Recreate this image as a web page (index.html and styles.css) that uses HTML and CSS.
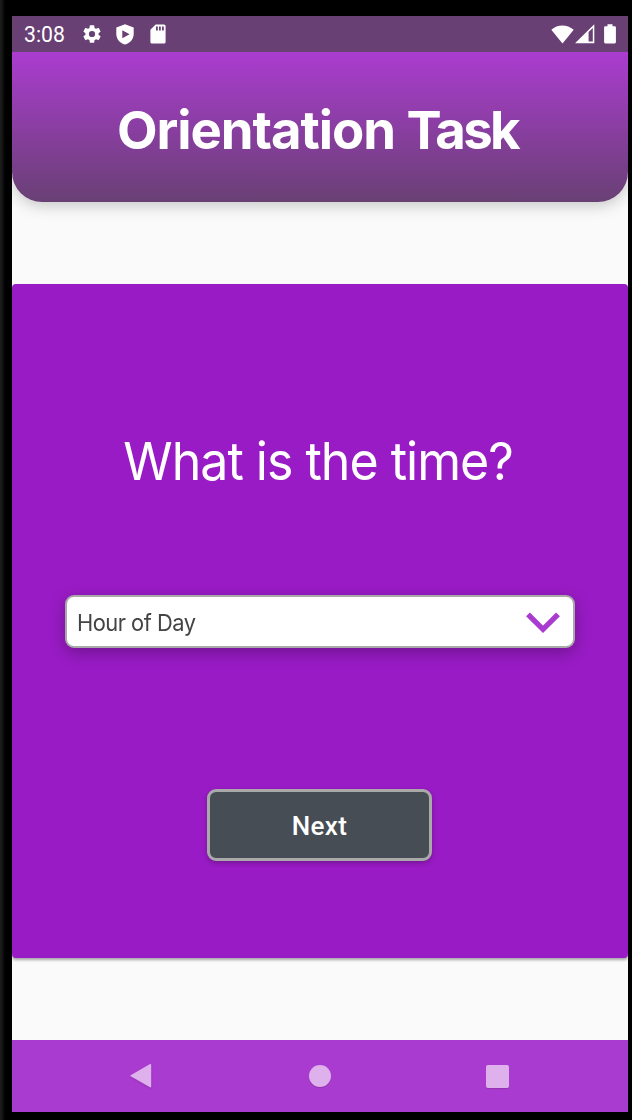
FILE: index.html
```html
<!DOCTYPE html>
<html lang="en">
<head>
<meta charset="utf-8">
<title>Orientation Task</title>
<link rel="stylesheet" href="styles.css">
</head>
<body>
<div class="phone">
  <div class="status-bar">
    <span class="clock">3:08</span>
    <svg class="gear" width="22" height="22" viewBox="0 0 24 24"><path fill="#fff" d="M19.14 12.94c.04-.3.06-.61.06-.94 0-.32-.02-.64-.07-.94l2.03-1.58a.49.49 0 0 0 .12-.61l-1.92-3.32a.49.49 0 0 0-.59-.22l-2.39.96c-.5-.38-1.03-.7-1.62-.94l-.36-2.54a.48.48 0 0 0-.48-.41h-3.84c-.24 0-.43.17-.47.41l-.36 2.54c-.59.24-1.13.57-1.62.94l-2.39-.96a.48.48 0 0 0-.59.22L2.74 8.87c-.12.21-.08.47.12.61l2.03 1.58c-.05.3-.09.63-.09.94s.02.64.07.94l-2.03 1.58a.49.49 0 0 0-.12.61l1.92 3.32c.12.22.37.29.59.22l2.39-.96c.5.38 1.03.7 1.62.94l.36 2.54c.05.24.24.41.48.41h3.84c.24 0 .44-.17.47-.41l.36-2.54c.59-.24 1.13-.56 1.62-.94l2.39.96c.22.08.47 0 .59-.22l1.92-3.32a.49.49 0 0 0-.12-.61zM12 15.4a3.4 3.4 0 1 1 0-6.8 3.4 3.4 0 0 1 0 6.8z"/></svg>
    <svg class="shield" width="18" height="21" viewBox="0 0 18 21"><path fill="#fff" fill-rule="evenodd" d="M9 .3 17.7 3.6V10C17.7 15 14 19.2 9 20.6 4 19.2.3 15 .3 10V3.6zM6.3 6.2v8l7.3-4z"/></svg>
    <svg class="sd" width="16" height="20" viewBox="0 0 16 20"><path fill="#fff" fill-rule="evenodd" d="M5.6.5H14A1.6 1.6 0 0 1 15.6 2.1V18A1.6 1.6 0 0 1 14 19.6H2A1.6 1.6 0 0 1 .4 18V5.8zM6 2.6v4h1.8v-4zM9 2.6v4h1.8v-4zM12 2.6v4h1.8v-4z"/></svg>
    <span class="spacer"></span>
    <svg class="wifi" width="23" height="19" viewBox="0 0 23 19"><path fill="#fff" d="M.3 4.7C6.5-1 16-1 22.7 4.7L11.5 18.4z"/></svg>
    <svg class="signal" width="20" height="20" viewBox="0 0 20 20"><path fill="#fff" fill-rule="evenodd" d="M0 19.3 19.3.2V19.3zM13.6 8.1V17.4H17.8V3.9z"/></svg>
    <svg class="battery" width="12" height="20" viewBox="0 0 12 20"><path fill="#fff" d="M3.5.3h5v1.9h2.1c.8 0 1.3.5 1.3 1.2v14.7c0 .8-.5 1.3-1.3 1.3H1.4c-.8 0-1.3-.5-1.3-1.3V3.4c0-.7.5-1.2 1.3-1.2h2.1z"/></svg>
  </div>
  <header class="header"><h1 class="title">Orientation <span class="title-end">Task</span></h1></header>
  <main class="card">
    <p class="question">What is the time?</p>
    <div class="select">
      <span class="select-label">Hour of Day</span>
      <svg width="34" height="22" viewBox="0 0 34 22"><path fill="none" stroke="#aa3bd0" stroke-width="5.4" d="M2 2.3 17 17.3 32 2.3"/></svg>
    </div>
    <button class="next" type="button">Next</button>
  </main>
  <nav class="nav-bar">
    <svg class="back" width="22" height="26" viewBox="0 0 22 26"><path fill="#deb1ec" d="M.7 12.2 19.6 1.2Q21.2.4 21.2 2V23.4Q21.2 25 19.6 24.1L.7 13.2Q0 12.7.7 12.2z"/></svg>
    <span class="home"></span>
    <span class="recent"></span>
  </nav>
</div>
</body>
</html>
```
FILE: styles.css
```css
* { box-sizing: border-box; }
html { background: #000; }
body {
  margin: 0;
  width: 632px;
  height: 1120px;
  padding: 16px 4px 8px 12px;
  overflow: hidden;
  background: linear-gradient(90deg, #1c1c1c 0, #161616 2px, #000 5px);
  font-family: Inter, "Liberation Sans", sans-serif;
}
.phone {
  width: 616px;
  height: 1096px;
  display: flex;
  flex-direction: column;
  background: #fafafa;
  overflow: hidden;
  box-shadow: 0 -20px 0 #000;
}
svg { display: block; flex: none; }
.status-bar {
  flex: none;
  position: relative;
  z-index: 1;
  height: 36px;
  padding: 0 12px;
  display: flex;
  align-items: center;
  background: #694074;
}
.clock {
  width: 57px;
  font: 21.2px/36px Roboto, sans-serif;
  color: #fff;
  padding-top: 2px;
}
.shield { margin-left: 13px; }
.sd { margin-left: 16px; }
.spacer { flex: 1; }
.signal { margin-left: 1px; }
.battery { margin-left: 9px; }
.header {
  flex: none;
  height: 150px;
  display: flex;
  justify-content: center;
  background: linear-gradient(#ab3cd0, #694074);
  border-radius: 0 0 30px 30px;
  box-shadow: 0 4px 15px rgba(0, 0, 0, .2);
}
.title {
  margin: 0;
  padding: 46px 5px 0 0;
  font-size: 52.7px;
  line-height: 64px;
  font-weight: 700;
  letter-spacing: -1.05px;
  color: #fff;
  white-space: nowrap;
}
.title-end { letter-spacing: -2.6px; }
.card {
  flex: none;
  height: 674px;
  margin-top: 82px;
  display: flex;
  flex-direction: column;
  align-items: center;
  background: #991bc5;
  border-radius: 4px;
  box-shadow: 0 2px 3px rgba(0, 0, 0, .35);
}
.question {
  margin: 145px 0 0;
  padding-right: 4px;
  font-size: 52.7px;
  line-height: 64px;
  font-weight: 400;
  letter-spacing: -1.05px;
  transform: scaleX(.95);
  color: #fff;
  white-space: nowrap;
}
.select {
  width: 510px;
  height: 53px;
  margin-top: 102px;
  padding: 2px 13px 0 10px;
  display: flex;
  align-items: center;
  justify-content: space-between;
  background: #fff;
  border: 2px solid #a9a9a9;
  border-radius: 9px;
  box-shadow: 0 5px 16px rgba(0, 0, 0, .27);
}
.select-label {
  font-size: 23px;
  letter-spacing: -.53px;
  transform: scaleX(.95);
  transform-origin: left center;
  color: #444;
}
.next {
  width: 225px;
  height: 72px;
  margin: 141px 2px 0 0;
  padding: 2px 0 0 1px;
  font: 500 26px/30px Roboto, sans-serif;
  letter-spacing: .3px;
  color: #fff;
  background: #464d54;
  border: 3px solid #a9a9a9;
  border-radius: 9px;
  box-shadow: 0 2px 5px rgba(0, 0, 0, .25);
}
.nav-bar {
  flex: none;
  height: 72px;
  margin-top: auto;
  padding: 0 119px 0 118px;
  display: grid;
  grid-template-columns: 1fr auto 1fr;
  align-items: center;
  background: #aa3bd0;
}
.back { filter: drop-shadow(0 1px 1px rgba(0, 0, 0, .15)); }
.home {
  width: 22px;
  height: 22px;
  margin-left: 1px;
  border-radius: 50%;
  background: #deb1ec;
  box-shadow: 0 1px 1px rgba(0, 0, 0, .15);
}
.recent {
  justify-self: end;
  width: 23px;
  height: 23px;
  border-radius: 2px;
  background: #deb1ec;
  box-shadow: 0 1px 1px rgba(0, 0, 0, .15);
}
```
